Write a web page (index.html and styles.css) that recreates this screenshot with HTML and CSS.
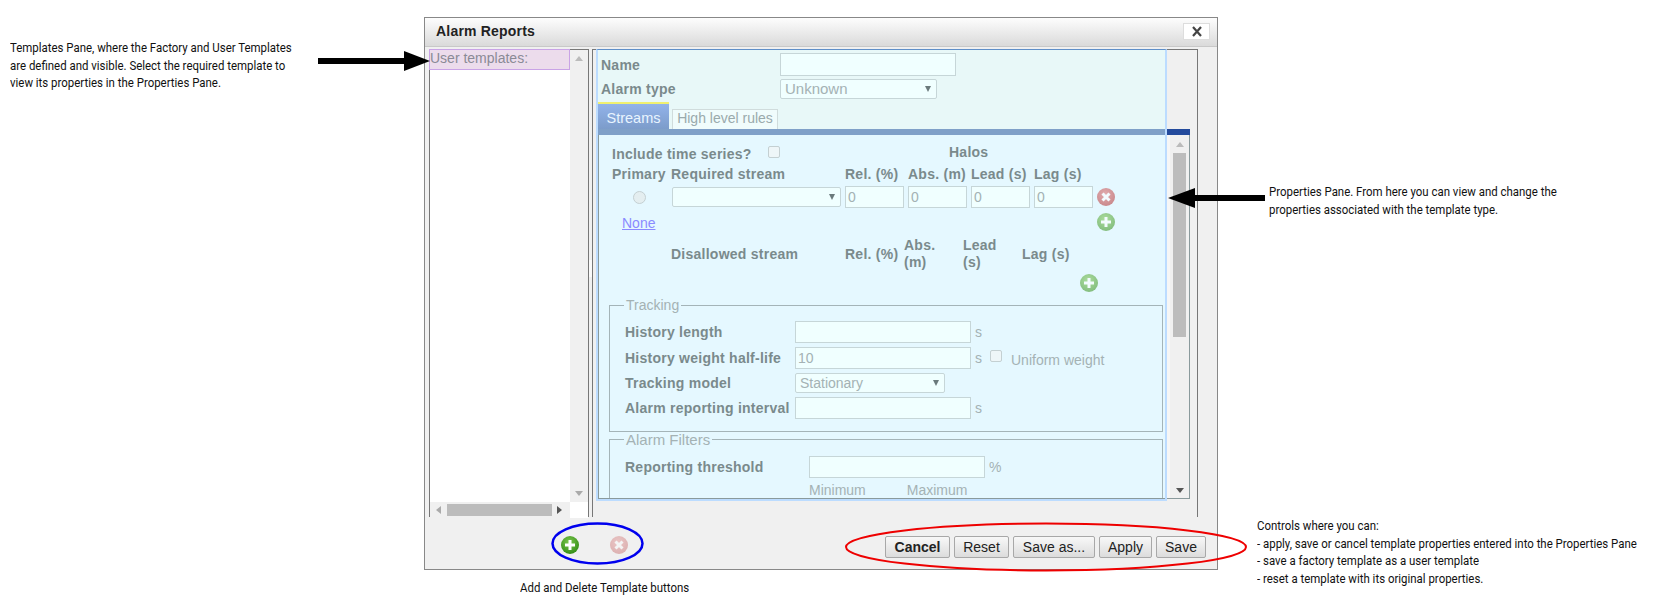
FILE: index.html
```html
<!DOCTYPE html>
<html lang="en">
<head>
    <meta charset="UTF-8">
    <title>Alarm Reports</title>
    <link rel="stylesheet" href="styles.css">
</head>
<body>
    <svg class="defs" width="0" height="0">
        <defs>
            <radialGradient id="greenBall" cx="45%" cy="35%" r="70%">
                <stop offset="0" stop-color="#7ec850"/>
                <stop offset="1" stop-color="#2f8a12"/>
            </radialGradient>
            <radialGradient id="redBall" cx="45%" cy="35%" r="70%">
                <stop offset="0" stop-color="#e07070"/>
                <stop offset="1" stop-color="#b02a2a"/>
            </radialGradient>
            <symbol id="icon-add" viewBox="0 0 18 18">
                <circle cx="9" cy="9" r="9" fill="url(#greenBall)"/>
                <path d="M9 4v10M4 9h10" stroke="#fff" stroke-width="3"/>
            </symbol>
            <symbol id="icon-del" viewBox="0 0 18 18">
                <circle cx="9" cy="9" r="9" fill="url(#redBall)"/>
                <path d="M5.500 5.500l7 7M12.500 5.500l-7 7" stroke="#fff" stroke-width="3"/>
            </symbol>
        </defs>
    </svg>

    <div class="dialog">
        <div class="title-bar">
            <span class="title">Alarm Reports</span>
            <button class="close-btn">
                <svg width="12" height="11" viewBox="0 0 12 11"><path d="M2 1l8 9M10 1l-8 9" stroke="#444" stroke-width="2.200"/></svg>
            </button>
        </div>

        <div class="dialog-body">
            <div class="templates-pane">
                <div class="template-list">
                    <div class="template-item">User templates:</div>
                </div>
                <div class="vscroll">
                    <span class="arrow up"></span>
                    <span class="spacer"></span>
                    <span class="arrow down"></span>
                </div>
                <div class="hscroll">
                    <span class="arrow left"></span>
                    <span class="hthumb"></span>
                    <span class="arrow right"></span>
                </div>
                <div class="corner"></div>
            </div>

            <div class="splitter"><span class="grip"></span></div>

            <div class="props-pane">
                <div class="top-form">
                    <div class="top-row">
                        <label class="lbl name-lbl">Name</label>
                        <input class="field name-field" type="text">
                    </div>
                    <div class="top-row second">
                        <label class="lbl name-lbl">Alarm type</label>
                        <div class="select type-select">Unknown</div>
                    </div>
                    <div class="tabs">
                        <div class="tab active">Streams</div>
                        <div class="tab">High level rules</div>
                    </div>
                </div>
                <div class="tab-strip"></div>

                <div class="tab-content">
                    <div class="scroller">
                        <div class="include-row">
                            <label class="lbl include-lbl">Include time series?</label>
                            <input class="check raised" type="checkbox">
                            <span class="lbl halos raised">Halos</span>
                        </div>

                        <div class="stream-grid">
                            <span class="lbl">Primary</span>
                            <span class="lbl nudge">Required stream</span>
                            <span class="lbl">Rel. (%)</span>
                            <span class="lbl">Abs. (m)</span>
                            <span class="lbl">Lead (s)</span>
                            <span class="lbl">Lag (s)</span>
                            <span></span>

                            <span class="radio-cell"><input class="radio" type="radio"></span>
                            <div class="select stream-select"></div>
                            <input class="field halo" type="text" value="0">
                            <input class="field halo" type="text" value="0">
                            <input class="field halo" type="text" value="0">
                            <input class="field halo" type="text" value="0">
                            <svg class="ball faded"><use href="#icon-del"/></svg>

                            <a class="none-link" href="#">None</a>
                            <span></span><span></span><span></span><span></span><span></span>
                            <svg class="ball faded"><use href="#icon-add"/></svg>
                        </div>

                        <div class="disallowed-grid">
                            <span></span>
                            <span class="lbl nudge">Disallowed stream</span>
                            <span class="lbl nudge">Rel. (%)</span>
                            <span class="lbl">Abs.<br>(m)</span>
                            <span class="lbl">Lead<br>(s)</span>
                            <span class="lbl">Lag (s)</span>
                        </div>
                        <div class="disallowed-add">
                            <svg class="ball faded"><use href="#icon-add"/></svg>
                        </div>

                        <fieldset class="group">
                            <legend>Tracking</legend>
                            <div class="track-row">
                                <label class="lbl">History length</label>
                                <input class="field wide" type="text">
                                <span class="unit">s</span>
                            </div>
                            <div class="track-row gap4">
                                <label class="lbl">History weight half-life</label>
                                <input class="field wide" type="text" value="10">
                                <span class="unit">s</span>
                                <input class="check uniform raised" type="checkbox">
                                <span class="uniform-lbl">Uniform weight</span>
                            </div>
                            <div class="track-row">
                                <label class="lbl">Tracking model</label>
                                <div class="select model-select">Stationary</div>
                            </div>
                            <div class="track-row">
                                <label class="lbl">Alarm reporting interval</label>
                                <input class="field wide" type="text">
                                <span class="unit">s</span>
                            </div>
                        </fieldset>

                        <fieldset class="group filters">
                            <legend>Alarm Filters</legend>
                            <div class="track-row threshold">
                                <label class="lbl">Reporting threshold</label>
                                <input class="field wide" type="text">
                                <span class="unit">%</span>
                            </div>
                            <div class="minmax">
                                <span>Minimum</span>
                                <span>Maximum</span>
                            </div>
                        </fieldset>
                    </div>
                    <div class="vscroll props-scroll">
                        <span class="arrow up"></span>
                        <span class="vthumb"></span>
                        <span class="spacer"></span>
                        <span class="arrow down dark"></span>
                    </div>
                </div>

                <div class="pane-mask"></div>
            </div>
        </div>

        <div class="dialog-footer">
            <svg class="ball add-template"><use href="#icon-add"/></svg>
            <svg class="ball del-template"><use href="#icon-del"/></svg>
            <div class="buttons">
                <button class="btn cancel">Cancel</button>
                <button class="btn reset">Reset</button>
                <button class="btn save-as">Save as...</button>
                <button class="btn apply">Apply</button>
                <button class="btn save">Save</button>
            </div>
        </div>
    </div>

    <!-- callouts drawn over the screenshot -->
    <svg class="callouts" width="1666" height="614" viewBox="0 0 1666 614">
        <path d="M318 61h88" stroke="#000" stroke-width="6"/>
        <path d="M404 51l26 10-26 10z" fill="#000"/>
        <path d="M1194 198h71" stroke="#000" stroke-width="6"/>
        <path d="M1168 198l27-10v20z" fill="#000"/>
        <ellipse cx="597.500" cy="543.500" rx="45" ry="20" fill="none" stroke="#0000ee" stroke-width="2.500"/>
        <ellipse cx="1046" cy="547" rx="200" ry="23.500" fill="none" stroke="#ee0000" stroke-width="2"/>
    </svg>

    <p class="note note-templates">Templates Pane, where the Factory and User Templates<br>are defined and visible. Select the required template to<br>view its properties in the Properties Pane.</p>
    <p class="note note-props">Properties Pane. From here you can view and change the<br>properties associated with the template type.</p>
    <p class="note note-controls">Controls where you can:<br>- apply, save or cancel template properties entered into the Properties Pane<br>- save a factory template as a user template<br>- reset a template with its original properties.</p>
    <p class="note note-buttons">Add and Delete Template buttons</p>
</body>
</html>
```

FILE: styles.css
```css
html, body {
    margin: 0;
    padding: 0;
}
body {
    position: relative;
    width: 1666px;
    height: 614px;
    overflow: hidden;
    background-color: #fff;
    font-family: "Liberation Sans", Arial, sans-serif;
    font-size: 14px;
    color: #222;
}
.defs {
    position: absolute;
}

/* dialog */
.dialog {
    box-sizing: border-box;
    width: 794px;
    height: 553px;
    margin: 17px 0 0 424px;
    display: flex;
    flex-direction: column;
    border: 1px solid #888;
    background-color: #f0f0f0;
}
.title-bar {
    box-sizing: border-box;
    height: 29px;
    flex: none;
    display: flex;
    align-items: center;
    justify-content: space-between;
    padding: 0 7px 2px 11px;
    background: linear-gradient(#fdfdfd, #dadada);
    border-bottom: 1px solid #c8c8c8;
}
.title {
    font-weight: bold;
    letter-spacing: .2px;
    color: #222;
}
.close-btn {
    width: 27px;
    height: 17px;
    padding: 0;
    display: flex;
    align-items: center;
    justify-content: center;
    background-color: #fff;
    border: 1px solid #ddd;
}
.dialog-body {
    flex: none;
    height: 470px;
    display: flex;
    padding: 2px 0 0 4px;
    box-sizing: border-box;
}

/* templates pane */
.templates-pane {
    box-sizing: border-box;
    width: 160px;
    display: grid;
    grid-template-columns: 140px 18px;
    grid-template-rows: 452px 16px;
    border: 1px solid #777;
    border-bottom: none;
}
.template-list {
    background-color: #fff;
}
.template-item {
    box-sizing: border-box;
    height: 21px;
    margin-left: -1px;
    margin-top: -1px;
    line-height: 17px;
    color: #8a8a96;
    background-color: #ecdcec;
    border: 1px solid #c9a3e6;
}
.vscroll {
    display: flex;
    flex-direction: column;
    align-items: center;
    background-color: #f0f0f0;
    padding: 6px 0;
}
.spacer {
    flex: 1;
}
.hscroll {
    display: flex;
    align-items: center;
    padding: 0 6px;
    gap: 5px;
    background-color: #f0f0f0;
}
.hthumb {
    width: 105px;
    height: 12px;
    margin-left: 1px;
    background-color: #bcbcbc;
}
.corner {
    background-color: #fff;
}
.arrow {
    width: 0;
    height: 0;
    flex: none;
    border: 4px solid transparent;
}
.arrow.up {
    border-top: none;
    border-bottom: 5px solid #bbb;
}
.arrow.down {
    border-bottom: none;
    border-top: 5px solid #aaa;
}
.arrow.down.dark {
    border-top-color: #555;
}
.arrow.left {
    border-left: none;
    border-right: 5px solid #aaa;
}
.arrow.right {
    border-right: none;
    border-left: 5px solid #555;
}
.splitter {
    width: 3px;
    flex: none;
    display: flex;
    align-items: flex-start;
}
.grip {
    width: 3px;
    height: 17px;
    margin-top: 211px;
    background-color: #fafafa;
}

/* properties pane */
.props-pane {
    position: relative;
    box-sizing: border-box;
    width: 606px;
    flex: none;
    border: 1px solid #777;
    border-bottom: none;
    padding-left: 5px;
}
.top-form {
    box-sizing: border-box;
    width: 569px;
    height: 79px;
    padding: 3px 0 0 3px;
    background-color: #e8f8f8;
    display: flex;
    flex-direction: column;
}
.top-row {
    display: flex;
    align-items: center;
    height: 23px;
}
.top-row.second {
    height: 20px;
    margin-top: 3px;
}
.name-lbl {
    width: 179px;
}
.lbl {
    font-weight: bold;
    letter-spacing: .25px;
    color: #7a8a8c;
}
.nudge {
    margin-left: -1px;
}
.field {
    box-sizing: border-box;
    height: 22px;
    padding: 0 2px;
    font-family: inherit;
    font-size: 14px;
    color: #a4b2b4;
    background-color: #f0ffff;
    border: 1px solid #c6d6d8;
    outline: none;
}
.name-field {
    width: 176px;
    height: 23px;
}
.select {
    box-sizing: border-box;
    height: 20px;
    display: flex;
    align-items: center;
    padding: 0 5px 0 4px;
    color: #a4b2b4;
    background-color: #f0ffff;
    border: 1px solid #c6d6d8;
    border-radius: 2px;
}
.select::after {
    content: "";
    margin-left: auto;
    border: 3px solid transparent;
    border-top: 6px solid #6a7a7c;
    border-bottom: none;
}
.type-select {
    width: 157px;
    font-size: 15px;
    line-height: 16px;
    padding-bottom: 1px;
}
.tabs {
    display: flex;
    align-items: flex-end;
    gap: 3px;
    margin: 3px 0 0 -3px;
    height: 27px;
}
.tab {
    box-sizing: border-box;
    width: 106px;
    height: 20px;
    line-height: 17px;
    text-align: center;
    color: #9aaaac;
    background-color: #f0fcfc;
    border: 1px solid #d0dcdc;
    border-bottom: none;
}
.tab.active {
    width: 71px;
    height: 27px;
    line-height: 28px;
    font-size: 14.500px;
    color: #e8f4ff;
    background: linear-gradient(#92b3ea, #7c9cca);
    border: none;
    border-top: 2px solid #f0f070;
}
.tab-strip {
    width: 592px;
    height: 6px;
    background: linear-gradient(to right, #7fa0c8 569px, #234a9c 569px);
}
.tab-content {
    box-sizing: border-box;
    width: 592px;
    height: 364px;
    display: flex;
    justify-content: space-between;
    border: 1px solid #8a9a9c;
    border-top: none;
    background-color: #f6f6f6;
}
.scroller {
    box-sizing: border-box;
    width: 568px;
    padding-left: 10px;
    overflow: hidden;
    background-color: #e5f8ff;
}
.props-scroll {
    width: 19px;
    padding: 7px 0 5px;
    background-color: #f0f0f0;
}
.vthumb {
    width: 13px;
    height: 184px;
    margin-top: 6px;
    background-color: #bcbcbc;
}
.include-row {
    display: flex;
    align-items: center;
    height: 18px;
    margin: 10px 0 0 3px;
}
.include-lbl {
    width: 156px;
}
.raised {
    margin-bottom: 4px;
}
.check {
    appearance: none;
    box-sizing: border-box;
    width: 12px;
    height: 12px;
    margin-top: 0;
    margin-left: 0;
    margin-right: 0;
    background-color: #eef6f8;
    border: 1px solid #c4d0d2;
    border-radius: 2px;
}
.check.raised {
    margin-bottom: 4px;
}
.halos {
    margin-left: 169px;
}
.stream-grid {
    display: grid;
    grid-template-columns: 60px 173px 63px 63px 63px 63px 18px;
    grid-template-rows: 22px 24px 25px;
    align-items: center;
    margin-left: 3px;
}
.stream-grid .halo {
    width: 59px;
}
.radio-cell {
    display: flex;
    justify-content: center;
    width: 54px;
}
.radio {
    appearance: none;
    width: 13px;
    height: 13px;
    margin: 0;
    background-color: #e4eef0;
    border: 1px solid #c4d0d2;
    border-radius: 50%;
}
.stream-select {
    width: 169px;
}
.none-link {
    margin: 2px 0 0 10px;
    color: #8a8aff;
}
.ball {
    display: block;
    width: 18px;
    height: 18px;
}
.ball.faded {
    opacity: .55;
}
.del-template {
    opacity: .32;
}
.disallowed-grid {
    display: grid;
    grid-template-columns: 60px 174px 58px 59px 59px 58px;
    align-items: center;
    margin-left: 3px;
    line-height: 17px;
    height: 40px;
    white-space: nowrap;
}
.disallowed-add {
    display: flex;
    margin-left: 471px;
    height: 22px;
}
.group {
    box-sizing: border-box;
    width: 554px;
    min-width: 0;
    margin: 1px 0 0;
    padding: 0 0 12px 15px;
    border: 1px solid #a4b4b8;
}
.group legend {
    padding: 0 2px;
    margin-left: -1px;
    line-height: 17px;
    color: #a4b2b4;
}
.track-row {
    display: flex;
    align-items: center;
    height: 22px;
    margin-top: 3px;
}
.track-row:first-of-type {
    margin-top: 7px;
}
.track-row.gap4 {
    margin-top: 4px;
}
.track-row .lbl {
    width: 170px;
    flex: none;
    white-space: nowrap;
}
.wide {
    width: 176px;
}
.unit {
    margin-left: 4px;
    color: #a4b2b4;
}
.uniform {
    margin-left: 8px;
}
.uniform-lbl {
    margin: 4px 0 0 9px;
    color: #a4b2b4;
}
.model-select {
    width: 150px;
}
.filters {
    margin-top: -1px;
}
.filters legend {
    font-size: 15px;
}
.track-row.threshold {
    margin-top: 8px;
}
.threshold .lbl {
    width: 184px;
}
.minmax {
    display: flex;
    gap: 41px;
    margin: 4px 0 0 184px;
    color: #a4b2b4;
}
.pane-mask {
    position: absolute;
    top: -1px;
    left: 3px;
    box-sizing: border-box;
    width: 571px;
    height: 452px;
    border: 2px solid #bcdcff;
    border-top: 1px solid #5f8fc8;
}

/* footer */
.dialog-footer {
    flex: 1;
    display: flex;
    align-items: flex-start;
    padding: 19px 11px 0 136px;
}
.del-template {
    margin-left: 31px;
}
.buttons {
    display: flex;
    gap: 4px;
    margin-left: auto;
}
.btn {
    box-sizing: border-box;
    height: 22px;
    padding: 0;
    font-family: inherit;
    font-size: 14px;
    color: #222;
    background: linear-gradient(#f8f8f8, #dcdcdc);
    border: 1px solid #a8a8a8;
    border-radius: 2px;
}
.cancel { width: 65px; font-weight: bold; }
.reset { width: 55px; }
.save-as { width: 82px; }
.apply { width: 53px; }
.save { width: 50px; }

/* annotations around the dialog */
.callouts {
    position: absolute;
    left: 0;
    top: 0;
    pointer-events: none;
}
.note {
    position: absolute;
    margin: 0;
    font-family: "Roboto", sans-serif;
    font-size: 13px;
    line-height: 17.5px;
    color: #111;
    white-space: nowrap;
    transform: scaleX(.88);
    transform-origin: left top;
}
.note-templates { left: 10px; top: 39px; }
.note-props { left: 1269px; top: 183px; }
.note-controls { left: 1257px; top: 517px; }
.note-buttons { left: 520px; top: 579px; }
```
